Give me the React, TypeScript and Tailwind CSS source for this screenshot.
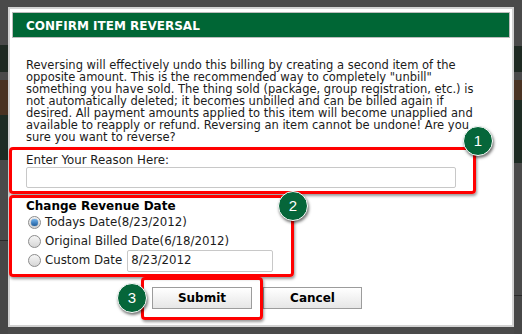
import React from "react";

const body = [
  "Reversing will effectively undo this billing by creating a second item of the",
  'opposite amount. This is the recommended way to completely "unbill"',
  "something you have sold. The thing sold (package, group registration, etc.) is",
  "not automatically deleted; it becomes unbilled and can be billed again if",
  "desired. All payment amounts applied to this item will become unapplied and",
  "available to reapply or refund. Reversing an item cannot be undone! Are you",
  "sure you want to reverse?",
];

function Radio({ checked }: { checked?: boolean }) {
  return (
    <span className="flex h-[13px] w-[13px] items-center justify-center rounded-full border border-[#8c8c8c] bg-gradient-to-b from-[#f6f6f6] to-[#d6d6d6]">
      {checked && (
        <span className="h-[7px] w-[7px] rounded-full bg-gradient-to-b from-[#6fb3ee] to-[#1d5c9c] shadow-[0_0_1px_#0d3c6c]" />
      )}
    </span>
  );
}

function Badge({ n, className }: { n: string; className: string }) {
  return (
    <div
      className={`absolute flex h-[30px] w-[30px] items-center justify-center rounded-full border-[1.5px] border-white bg-[#06663a] text-[15px] text-white shadow-[1px_2px_3px_rgba(0,0,0,0.55)] ${className}`}
      style={{ fontFamily: '"Liberation Sans", Arial, sans-serif' }}
    >
      {n}
    </div>
  );
}

export default function App() {
  return (
    <div
      className="relative flex h-[334px] w-[522px] overflow-hidden bg-[#4a4a4a]"
      style={{ fontFamily: '"DejaVu Sans", Verdana, sans-serif' }}
    >
      {/* page behind the dialog, left edge */}
      <div className="flex w-[8px] flex-col">
        <div className="h-[45px] bg-[#4a4a4a]" />
        <div className="h-[27px] bg-[#1f2a23]" />
        <div className="h-[8px] bg-[#4a4a4a]" />
        <div className="h-[35px] bg-[#4a3322]" />
        <div className="h-[45px] bg-[#1e2c24]" />
        <div className="h-[80px] bg-[#4a4a4a]" />
        <div className="h-px bg-[#2a2a2a]" />
        <div className="flex-1 bg-[#474747]" />
      </div>

      <div className="pt-[7px]">
        <div className="flex h-[320px] w-[506px] flex-col border-2 border-[#d2d2d2] bg-white">
          <div className="mx-[2px] mt-[3px] h-[26px] border border-[#bcbcbc] bg-[#006635] pl-[13px] pt-[1px] text-[12px] font-bold leading-[24px] text-white">
            CONFIRM ITEM REVERSAL
          </div>

          <div className="pl-[16px] text-[#1b1b1b]">
            <div className="mt-[21px] text-[11.5px] leading-[12px]">
              {body.map((l) => (
                <div key={l} className="whitespace-nowrap">
                  {l}
                </div>
              ))}
            </div>

            <div className="mt-[11px] text-[11.8px] leading-[13px]">Enter Your Reason Here:</div>
            <div className="h-[21px] w-[430px] rounded-[2px] border border-[#c8c8c8] bg-white" />

            <div className="mt-[11px] text-[12px] font-bold leading-[14px] text-black">
              Change Revenue Date
            </div>
            <div className="text-[11.8px]">
              <div className="flex h-[19px] items-center gap-[4px] pl-[2px]">
                <Radio checked />
                <span>Todays Date(8/23/2012)</span>
              </div>
              <div className="flex h-[19px] items-center gap-[4px] pl-[2px]">
                <Radio />
                <span>Original Billed Date(6/18/2012)</span>
              </div>
              <div className="flex h-[19px] items-center gap-[4px] pl-[2px]">
                <Radio />
                <span>Custom Date</span>
                <div className="ml-[1px] flex h-[22px] w-[146px] shrink-0 items-center rounded-[2px] border border-[#c8c8c8] pl-[3px]">
                  8/23/2012
                </div>
              </div>
            </div>
          </div>

          <div className="mt-[17px] flex gap-[11px] pl-[142px]">
            <button className="h-[22px] w-[100px] border border-[#9c9c9c] bg-gradient-to-b from-white to-[#e6e6e6] text-[12px] font-bold text-black">
              Submit
            </button>
            <button className="h-[22px] w-[99px] border border-[#9c9c9c] bg-gradient-to-b from-white to-[#e6e6e6] text-[12px] font-bold text-black">
              Cancel
            </button>
          </div>
        </div>
      </div>

      {/* page behind the dialog, right edge */}
      <div className="flex flex-1 flex-col">
        <div className="h-[46px] bg-[#4a4a4a]" />
        <div className="h-[26px] bg-[#1f2a23]" />
        <div className="h-[8px] bg-[#4a4a4a]" />
        <div className="h-[20px] bg-[#4a3322]" />
        <div className="h-[63px] bg-[#1e2c24]" />
        <div className="h-[132px] bg-[#4a4a4a]" />
        <div className="h-px bg-[#2a2a2a]" />
        <div className="flex-1 bg-[#474747]" />
      </div>

      {/* annotation overlay */}
      <div className="pointer-events-none absolute inset-0">
        <div className="absolute left-[9px] top-[147px] h-[47px] w-[467px] rounded-[4px] border-[3px] border-[#ff0000] shadow-[1px_2px_3px_rgba(0,0,0,0.4)]" />
        <div className="absolute left-[9px] top-[195px] h-[82px] w-[285px] rounded-[4px] border-[3px] border-[#ff0000] shadow-[1px_2px_3px_rgba(0,0,0,0.4)]" />
        <div className="absolute left-[141px] top-[277px] h-[43px] w-[122px] rounded-[4px] border-[3px] border-[#ff0000] shadow-[1px_2px_3px_rgba(0,0,0,0.4)]" />
        <Badge n="1" className="left-[463px] top-[126px]" />
        <Badge n="2" className="left-[278px] top-[191px]" />
        <Badge n="3" className="left-[117px] top-[283px]" />
      </div>
    </div>
  );
}
